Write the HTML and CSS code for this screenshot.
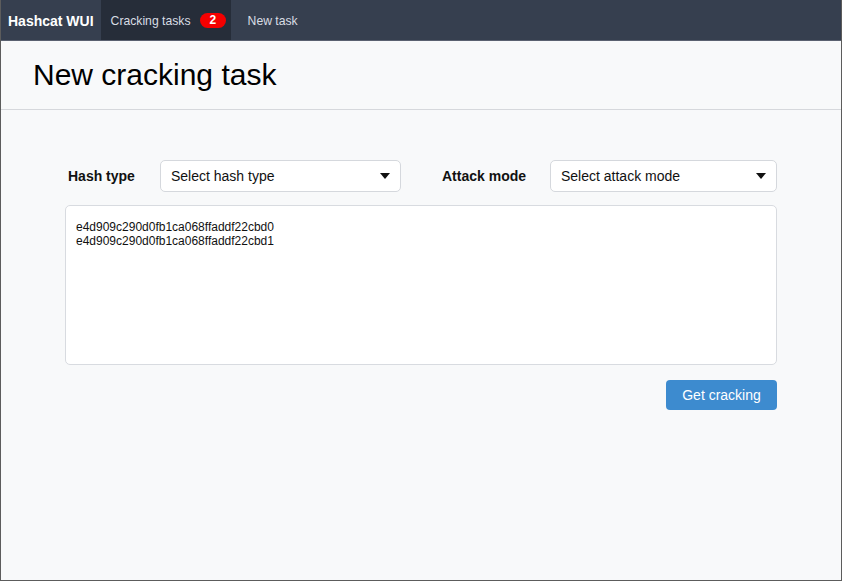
FILE: index.html
```html
<!DOCTYPE html>
<html>
<head>
<meta charset="utf-8">
<link rel="stylesheet" href="styles.css">
</head>
<body>
<div class="window">
  <nav class="navbar">
    <span class="brand">Hashcat WUI</span>
    <a class="nav-item active">Cracking tasks <span class="badge">2</span></a>
    <a class="nav-item">New task</a>
  </nav>
  <header class="page-header">
    <h1>New cracking task</h1>
  </header>
  <main class="content">
    <div class="field-row">
      <label class="field-label label-hash">Hash type</label>
      <div class="select select-hash"><span>Select hash type</span><span class="caret"></span></div>
      <label class="field-label label-attack">Attack mode</label>
      <div class="select select-attack"><span>Select attack mode</span><span class="caret"></span></div>
    </div>
    <textarea class="hashes">e4d909c290d0fb1ca068ffaddf22cbd0
e4d909c290d0fb1ca068ffaddf22cbd1</textarea>
    <div class="actions">
      <button class="btn-primary">Get cracking</button>
    </div>
  </main>
</div>
</body>
</html>
```
FILE: styles.css
```css
* { box-sizing: border-box; }
html, body { margin: 0; padding: 0; }
body {
  font-family: "Liberation Sans", Arial, sans-serif;
  background: #ffffff;
}
.window {
  width: 842px;
  height: 581px;
  border: 1px solid #5c5c5c;
  border-top: none;
  background: #f8f9fa;
  display: flex;
  flex-direction: column;
}
.navbar {
  height: 41px;
  background: #363f4f;
  border-bottom: 1px solid #5a6170;
  display: flex;
  align-items: stretch;
  flex-shrink: 0;
}
.brand {
  color: #ffffff;
  font-weight: bold;
  font-size: 14px;
  display: flex;
  align-items: center;
  padding: 1px 7px 0 7px;
  white-space: nowrap;
}
.nav-item {
  color: #d9dde4;
  font-size: 12.2px;
  display: flex;
  align-items: center;
  padding: 1px 10px 0 17px;
  white-space: nowrap;
  flex-shrink: 0;
}
.nav-item.active {
  background: #262d39;
  width: 130px;
  padding-left: 10px;
  padding-right: 0;
}
.badge {
  display: inline-block;
  background: #f50000;
  color: #ffffff;
  font-weight: bold;
  font-size: 12px;
  line-height: 15px;
  height: 15px;
  border-radius: 8px;
  padding: 0 10px;
  margin-left: 9px;
}
.page-header {
  height: 69px;
  border-bottom: 1px solid #d6d8dc;
  padding: 0 0 0 32px;
  display: flex;
  align-items: center;
  flex-shrink: 0;
}
.page-header h1 {
  margin: 0;
  font-size: 30px;
  font-weight: normal;
  color: #000000;
}
.content {
  padding: 50px 64px 0 64px;
}
.field-row {
  display: flex;
  align-items: center;
  height: 32px;
}
.field-label {
  font-weight: bold;
  font-size: 14px;
  color: #111111;
  padding-left: 3px;
}
.label-hash { width: 95px; }
.label-attack { width: 108px; padding-left: 0; margin-left: 41px; }
.select {
  height: 32px;
  background: #ffffff;
  border: 1px solid #d5d8dd;
  border-radius: 5px;
  display: flex;
  align-items: center;
  justify-content: space-between;
  padding: 0 10px 0 10px;
  font-size: 14px;
  color: #111111;
}
.select-hash { width: 241px; }
.select-attack { width: 227px; }
.caret {
  width: 0;
  height: 0;
  border-left: 5px solid transparent;
  border-right: 5px solid transparent;
  border-top: 6px solid #111111;
}
.hashes {
  display: block;
  width: 712px;
  height: 160px;
  margin-top: 13px;
  background: #ffffff;
  border: 1px solid #d8dbe0;
  border-radius: 5px;
  padding: 15px 10px;
  font-family: "Liberation Sans", Arial, sans-serif;
  font-size: 12px;
  line-height: 13.5px;
  color: #111111;
  resize: none;
  outline: none;
}
.actions {
  display: flex;
  justify-content: flex-end;
  margin-top: 15px;
}
.btn-primary {
  width: 111px;
  height: 30px;
  background: #3d8bcf;
  color: #ffffff;
  border: none;
  border-radius: 4px;
  font-family: "Liberation Sans", Arial, sans-serif;
  font-size: 14px;
  padding: 0;
}
```
